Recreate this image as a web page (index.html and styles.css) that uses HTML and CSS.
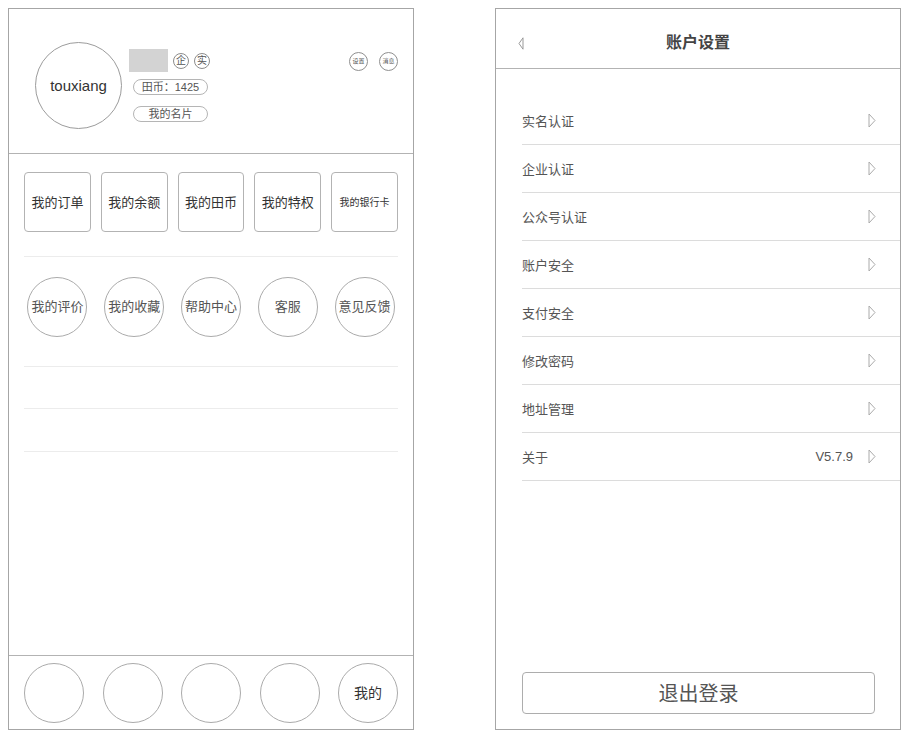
FILE: index.html
```html
<!DOCTYPE html>
<html lang="zh-CN">
<head>
<meta charset="utf-8">
<title>我的 / 账户设置</title>
<link rel="stylesheet" href="styles.css">
</head>
<body>
<div class="screens">
  <section class="phone">
    <header class="profile">
      <div class="avatar">touxiang</div>
      <div class="info">
        <div class="name-row">
          <span class="name-box"></span>
          <span class="badge">企</span>
          <span class="badge">实</span>
        </div>
        <div class="pill">田币：1425</div>
        <div class="pill pill-card">我的名片</div>
      </div>
      <div class="tools">
        <span class="tool">设置</span>
        <span class="tool">消息</span>
      </div>
    </header>
    <main class="menu">
      <div class="grid">
        <div class="square">我的订单</div>
        <div class="square">我的余额</div>
        <div class="square">我的田币</div>
        <div class="square">我的特权</div>
        <div class="square square-small">我的银行卡</div>
      </div>
      <div class="divider"></div>
      <div class="grid">
        <div class="cell"><div class="round">我的评价</div></div>
        <div class="cell"><div class="round">我的收藏</div></div>
        <div class="cell"><div class="round">帮助中心</div></div>
        <div class="cell"><div class="round">客服</div></div>
        <div class="cell"><div class="round">意见反馈</div></div>
      </div>
      <div class="rule rule-first"></div>
      <div class="rule"></div>
      <div class="rule rule-last"></div>
    </main>
    <nav class="tabbar">
      <div class="tab"></div>
      <div class="tab"></div>
      <div class="tab"></div>
      <div class="tab"></div>
      <div class="tab">我的</div>
    </nav>
  </section>

  <section class="phone">
    <header class="bar">
      <svg class="back" width="6" height="13" viewBox="0 0 6 13"><polygon points="5,0.8 1,6.5 5,12.2" fill="none" stroke="#999" stroke-width="1"/></svg>
      <h1 class="title">账户设置</h1>
    </header>
    <ul class="settings">
      <li class="row"><span class="label">实名认证</span><svg class="arrow" width="8" height="15" viewBox="0 0 8 15"><polygon points="1,1 7,7.5 1,14" fill="none" stroke="#aaa" stroke-width="1"/></svg></li>
      <li class="row"><span class="label">企业认证</span><svg class="arrow" width="8" height="15" viewBox="0 0 8 15"><polygon points="1,1 7,7.5 1,14" fill="none" stroke="#aaa" stroke-width="1"/></svg></li>
      <li class="row"><span class="label">公众号认证</span><svg class="arrow" width="8" height="15" viewBox="0 0 8 15"><polygon points="1,1 7,7.5 1,14" fill="none" stroke="#aaa" stroke-width="1"/></svg></li>
      <li class="row"><span class="label">账户安全</span><svg class="arrow" width="8" height="15" viewBox="0 0 8 15"><polygon points="1,1 7,7.5 1,14" fill="none" stroke="#aaa" stroke-width="1"/></svg></li>
      <li class="row"><span class="label">支付安全</span><svg class="arrow" width="8" height="15" viewBox="0 0 8 15"><polygon points="1,1 7,7.5 1,14" fill="none" stroke="#aaa" stroke-width="1"/></svg></li>
      <li class="row"><span class="label">修改密码</span><svg class="arrow" width="8" height="15" viewBox="0 0 8 15"><polygon points="1,1 7,7.5 1,14" fill="none" stroke="#aaa" stroke-width="1"/></svg></li>
      <li class="row"><span class="label">地址管理</span><svg class="arrow" width="8" height="15" viewBox="0 0 8 15"><polygon points="1,1 7,7.5 1,14" fill="none" stroke="#aaa" stroke-width="1"/></svg></li>
      <li class="row"><span class="label">关于</span><span class="value">V5.7.9</span><svg class="arrow" width="8" height="15" viewBox="0 0 8 15"><polygon points="1,1 7,7.5 1,14" fill="none" stroke="#aaa" stroke-width="1"/></svg></li>
    </ul>
    <button class="logout" type="button">退出登录</button>
  </section>
</div>
</body>
</html>
```
FILE: styles.css
```css
* {
  box-sizing: border-box;
}

html, body {
  margin: 0;
  padding: 0;
  background: #ffffff;
}

body {
  font-family: "Liberation Sans", "Noto Sans CJK SC", sans-serif;
  color: #444;
}

.screens {
  display: flex;
  gap: 81px;
  padding: 8px;
}

.phone {
  width: 406px;
  height: 722px;
  border: 1px solid #a6a6a6;
  display: flex;
  flex-direction: column;
}

/* ---------- left: profile ---------- */

.profile {
  height: 145px;
  flex: none;
  display: flex;
  align-items: flex-start;
  padding: 33px 15px 0 26px;
  border-bottom: 1px solid #b3b3b3;
}

.avatar {
  width: 87px;
  height: 87px;
  border: 1px solid #9c9c9c;
  border-radius: 50%;
  display: flex;
  align-items: center;
  justify-content: center;
  font-size: 15px;
  color: #333;
}

.info {
  margin: 7px 0 0 7px;
  display: flex;
  flex-direction: column;
  align-items: flex-start;
}

.name-row {
  display: flex;
  align-items: center;
  height: 23px;
}

.name-box {
  width: 39px;
  height: 23px;
  background: #d3d3d3;
}

.badge {
  width: 16px;
  height: 16px;
  border: 1px solid #8c8c8c;
  border-radius: 50%;
  margin-left: 5px;
  font-size: 10px;
  line-height: 14px;
  text-align: center;
  color: #555;
}

.badge:first-of-type {
  margin-left: 4px;
}

.pill {
  margin: 7px 0 0 4px;
  width: 75px;
  height: 16px;
  border: 1px solid #b5b5b5;
  border-radius: 8px;
  font-size: 11px;
  line-height: 14px;
  text-align: center;
  color: #555;
}

.pill-card {
  margin-top: 11px;
}

.tools {
  margin: 10px 0 0 auto;
  display: flex;
  gap: 11px;
}

.tool {
  width: 19px;
  height: 19px;
  border: 1px solid #8f8f8f;
  border-radius: 50%;
  font-size: 6px;
  line-height: 17px;
  text-align: center;
  color: #555;
}

/* ---------- left: menu ---------- */

.menu {
  flex: 1;
  padding: 18px 15px 0;
}

.grid {
  display: grid;
  grid-template-columns: repeat(5, 1fr);
  gap: 10px;
}

.square {
  height: 60px;
  border: 1px solid #b3b3b3;
  border-radius: 4px;
  display: flex;
  align-items: center;
  justify-content: center;
  padding-bottom: 2px;
  font-size: 13px;
  color: #333;
}

.square-small {
  font-size: 10px;
}

.divider {
  height: 1px;
  background: #ececec;
  margin: 24px 0 20px;
}

.cell {
  display: flex;
  justify-content: center;
}

.round {
  width: 60px;
  height: 60px;
  border: 1px solid #ababab;
  border-radius: 50%;
  display: flex;
  align-items: center;
  justify-content: center;
  padding-bottom: 3px;
  font-size: 13px;
  color: #555;
}

.rule {
  height: 1px;
  background: #ececec;
  margin-top: 41px;
}

.rule-first {
  margin-top: 29px;
}

.rule-last {
  margin-top: 42px;
}

/* ---------- left: tab bar ---------- */

.tabbar {
  flex: none;
  height: 74px;
  border-top: 1px solid #b3b3b3;
  padding: 7px 15px 0;
  display: flex;
  justify-content: space-between;
  align-items: flex-start;
}

.tab {
  width: 60px;
  height: 60px;
  border: 1px solid #ababab;
  border-radius: 50%;
  display: flex;
  align-items: center;
  justify-content: center;
  padding-bottom: 2px;
  font-size: 14px;
  color: #333;
}

/* ---------- right: settings ---------- */

.bar {
  flex: none;
  height: 60px;
  border-bottom: 1px solid #b3b3b3;
  display: flex;
  align-items: center;
  justify-content: center;
  padding-top: 5px;
  position: relative;
}

.back {
  position: absolute;
  left: 22px;
  top: 28px;
}

.title {
  margin: 0;
  font-size: 16px;
  font-weight: 600;
  color: #444;
}

.settings {
  list-style: none;
  margin: 0;
  padding: 28px 0 0 26px;
}

.row {
  height: 48px;
  border-bottom: 1px solid #dcdcdc;
  display: flex;
  align-items: center;
  padding-right: 24px;
}

.label {
  font-size: 13px;
  color: #555;
  flex: 1;
}

.value {
  font-size: 13px;
  color: #555;
  margin-right: 15px;
}

.arrow {
  display: block;
}

.logout {
  margin: auto 25px 15px 26px;
  height: 42px;
  border: 1px solid #adadad;
  border-radius: 4px;
  background: #fff;
  font-family: "Liberation Sans", "Noto Sans CJK SC", sans-serif;
  font-size: 20px;
  color: #555;
  padding: 0 0 2px;
}
```
